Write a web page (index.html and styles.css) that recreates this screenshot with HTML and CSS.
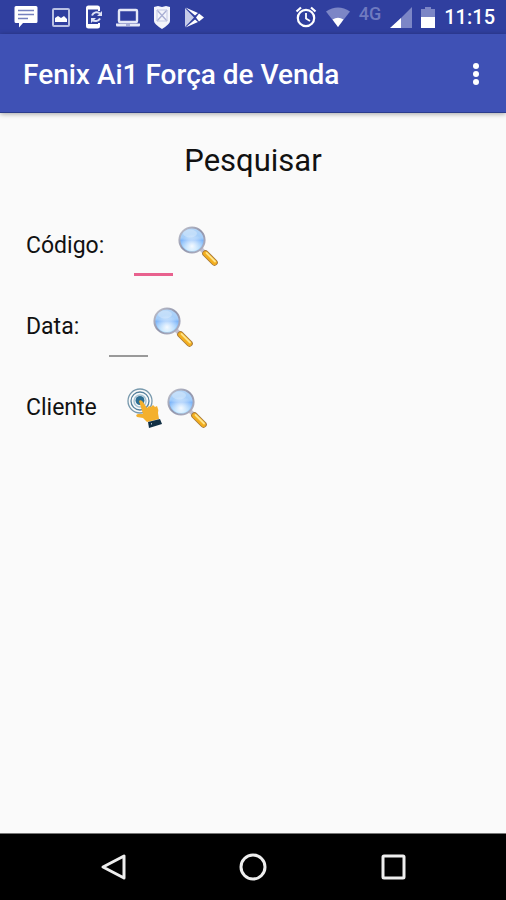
FILE: index.html
```html
<!DOCTYPE html>
<html lang="pt-BR">
<head>
<meta charset="utf-8">
<meta name="viewport" content="width=device-width, initial-scale=1">
<title>Fenix Ai1 Força de Venda</title>
<link rel="stylesheet" href="styles.css">
</head>
<body>
<svg class="defs" aria-hidden="true">
  <defs>
    <linearGradient id="glass" x1="0" y1="0" x2="0" y2="1">
      <stop offset="0" stop-color="#b4d6f8"/>
      <stop offset=".42" stop-color="#a3cdfa"/>
      <stop offset=".52" stop-color="#7cb5fa"/>
      <stop offset="1" stop-color="#b5e4ff"/>
    </linearGradient>
    <radialGradient id="shine" cx=".5" cy=".78" r=".55">
      <stop offset="0" stop-color="#fff" stop-opacity=".9"/>
      <stop offset="1" stop-color="#fff" stop-opacity="0"/>
    </radialGradient>
    <linearGradient id="rim" x1="0" y1="0" x2="1" y2="1">
      <stop offset="0" stop-color="#c3c5cf"/>
      <stop offset=".5" stop-color="#9195ac"/>
      <stop offset="1" stop-color="#b4b4c4"/>
    </linearGradient>
    <symbol id="magnifier" viewBox="0 0 40 40">
      <path d="M23 23l4 4" stroke="#c4c1d0" stroke-width="4"/>
      <circle cx="14" cy="14" r="12.6" fill="url(#glass)" stroke="url(#rim)" stroke-width="2"/>
      <circle cx="14" cy="14" r="11" fill="url(#shine)"/>
      <ellipse cx="12" cy="7.500" rx="7" ry="4" fill="#fff" opacity=".28"/>
      <path d="M27.500 27.500l9 9" stroke="#a77a3c" stroke-width="6.600" stroke-linecap="round"/>
      <path d="M27.500 27.500l9 9" stroke="#f3ae1d" stroke-width="4.800" stroke-linecap="round"/>
      <path d="M28.500 27l8.500 8.500" stroke="#ffe48a" stroke-width="1.800" stroke-linecap="round"/>
    </symbol>
  </defs>
</svg>

<div class="screen">
  <div class="status">
    <div class="notices">
      <svg width="24" height="24" viewBox="0 0 24 24"><path d="M2 1h20q1.500 0 1.500 1.500v14q0 1.500-1.500 1.500H9l-4 4.500V18H2q-1.500 0-1.500-1.500v-14Q.5 1 2 1z" fill="#fff"/><path d="M4 5.500h16M4 9.500h16M4 13.500h10" stroke="#7580bd" stroke-width="1.500"/></svg>
      <svg width="18" height="24" viewBox="0 0 18 24"><rect x="1" y="4" width="16" height="17" rx="1" fill="none" stroke="#b9c0e3" stroke-width="2"/><path d="M3 17v-4l3-2 3 2 3-2 3 3v3z" fill="#fff"/></svg>
      <svg width="18" height="24" viewBox="0 0 18 24"><path d="M15 6V3q0-1.500-1.500-1.500h-9Q3 1.500 3 3v18q0 1.500 1.500 1.500h9Q15 22.500 15 21v-3" fill="none" stroke="#fff" stroke-width="2"/><path d="M3 3h12M3 20.500h12" stroke="#fff" stroke-width="3"/><path d="M16 8.500a5 5 0 0 0-8 2M8 14.500a5 5 0 0 0 8-1" fill="none" stroke="#dfe3f6" stroke-width="2"/><path d="M18 6v5h-5zM7 18v-5h5z" fill="#dfe3f6"/></svg>
      <svg width="24" height="24" viewBox="0 0 24 24"><rect x="3" y="5" width="18" height="12" rx="1" fill="none" stroke="#e5e8f7" stroke-width="2.400"/><path d="M0 18.500h24v1.500q0 1.500-1 1.500H1q-1 0-1-1.500z" fill="#e5e8f7"/><path d="M10 20h4" stroke="#6873b5"/></svg>
      <svg width="16" height="24" viewBox="0 0 16 24"><path d="M0 2l4-1 4 1 4-1 4 1v14q0 3-8 8-8-5-8-8z" fill="#f3f4fb"/><path d="M3 5l10 11M13 5L3 16" stroke="#a9afd4" stroke-width="1.300"/><path d="M3 5h10v11H3z" fill="none" stroke="#c4c9e4" stroke-width="1"/></svg>
      <svg width="20" height="24" viewBox="0 0 20 24"><path d="M1 3v19l9-9.500z" fill="#c6cce8"/><path d="M1.500 2.500l9.500 8 3-2.500zM1.500 22.500l9.500-8 3 2.500z" fill="#fff"/><path d="M12 12.500l3-4 5 4-5 4z" fill="#fff"/></svg>
    </div>
    <div class="signals">
      <svg width="22" height="24" viewBox="0 0 22 24"><circle cx="11" cy="13" r="8.200" fill="none" stroke="#fff" stroke-width="2.200"/><path d="M11 8v5.500l4 2.500" fill="none" stroke="#fff" stroke-width="1.800"/><path d="M1.500 6.500l4.500-4M20.500 6.500l-4.500-4" stroke="#fff" stroke-width="2.200"/></svg>
      <svg width="24" height="24" viewBox="0 0 24 24"><path d="M0 6.500Q12-1.500 24 6.500L12 22z" fill="#7c86c6"/><path d="M6.500 14.500q5.500-3.500 11 0L12 22z" fill="#fff"/></svg>
      <span class="network">4G</span>
      <svg width="22" height="24" viewBox="0 0 22 24"><path d="M22 2v21H1z" fill="#7c86c6"/><path d="M11 13v10H0z" fill="#fff"/></svg>
      <svg width="14" height="24" viewBox="0 0 14 24"><path d="M0 4h4V2h6v2h4v9H0z" fill="#7c86c6"/><path d="M0 12h14v11H0z" fill="#fff"/></svg>
      <time class="clock">11:15</time>
    </div>
  </div>

  <header class="appbar">
    <h1 class="app-title">Fenix Ai1 Força de Venda</h1>
    <button class="more" type="button" aria-label="Mais opções"><svg width="8" height="24" viewBox="0 0 8 24"><g fill="#fff"><circle cx="4" cy="3" r="3"/><circle cx="4" cy="11" r="3"/><circle cx="4" cy="19" r="3"/></g></svg></button>
  </header>

  <main class="content">
    <h2 class="heading">Pesquisar</h2>
    <form class="form">
      <div class="row">
        <label class="label" for="codigo">Código:</label>
        <input class="field field-active" id="codigo" type="text">
        <button class="icon-button" type="button" aria-label="Pesquisar código"><svg width="40" height="40"><use href="#magnifier"/></svg></button>
      </div>
      <div class="row">
        <label class="label" for="data">Data:</label>
        <input class="field" id="data" type="text">
        <button class="icon-button" type="button" aria-label="Pesquisar data"><svg width="40" height="40"><use href="#magnifier"/></svg></button>
      </div>
      <div class="row">
        <span class="label">Cliente</span>
        <button class="icon-button" type="button" aria-label="Selecionar cliente">
          <svg width="35" height="40" viewBox="0 0 35 40"><g fill="none"><circle cx="13" cy="13" r="12" stroke="#7899ad" stroke-width="1.300"/><circle cx="13" cy="13" r="9" stroke="#55819c" stroke-width="1.300"/><circle cx="13" cy="13" r="6" stroke="#a9c5d5" stroke-width="1.500"/></g><circle cx="13" cy="12.500" r="4.500" fill="#2c6d92"/><path d="M12 13q2-2 4 1l4 6 2-2 2 1 2-2 2 2 2-1q2 4 1 7l1 6-12 3-4-4-6-1q-2-2 1-3l5 0z" fill="#f4b02d"/><path d="M21 34l12-3 2 5-13 4z" fill="#112f44"/><path d="M24 36l1-.3" stroke="#fff"/></svg>
        </button>
        <button class="icon-button" type="button" aria-label="Pesquisar cliente"><svg width="40" height="40"><use href="#magnifier"/></svg></button>
      </div>
    </form>
  </main>

  <nav class="navbar" aria-label="Sistema">
    <button class="nav-button" type="button" aria-label="Voltar"><svg width="28" height="28" viewBox="0 0 28 28"><path d="M25 3v22L4 14z"/></svg></button>
    <button class="nav-button" type="button" aria-label="Início"><svg width="28" height="28" viewBox="0 0 28 28"><circle cx="14" cy="14" r="12"/></svg></button>
    <button class="nav-button" type="button" aria-label="Recentes"><svg width="28" height="28" viewBox="0 0 28 28"><rect x="4" y="3" width="21" height="22" rx="1"/></svg></button>
  </nav>
</div>
</body>
</html>
```
FILE: styles.css
```css
* {
  box-sizing: border-box;
}

body {
  margin: 0;
  font-family: Roboto, "Liberation Sans", sans-serif;
  color: #111;
  background: #fafafa;
}

svg {
  display: block;
}

button {
  padding: 0;
  border: 0;
  background: none;
}

.defs {
  position: absolute;
  width: 0;
  height: 0;
}

.screen {
  display: flex;
  flex-direction: column;
  min-height: 100vh;
}

.status {
  display: flex;
  justify-content: space-between;
  align-items: center;
  height: 34px;
  padding: 0 11px 0 14px;
  background: #303f9f;
}

.notices {
  display: flex;
  align-items: center;
  gap: 14px;
}

.signals {
  display: flex;
  align-items: center;
  gap: 9px;
}

.network {
  align-self: flex-start;
  font-size: 18px;
  line-height: 18px;
  font-weight: 500;
  color: #6f7ac0;
}

.clock {
  font-size: 20px;
  line-height: 24px;
  font-weight: 500;
  color: #fff;
}

.appbar {
  display: flex;
  justify-content: space-between;
  align-items: center;
  height: 79px;
  padding: 4px 26px 0 23px;
  background: #3f51b5;
  border-bottom: 1px solid #2b3c8c;
  box-shadow: 0 1px 5px rgba(0, 0, 0, 0.35);
}

.app-title {
  margin: 0;
  font-size: 28px;
  line-height: 32px;
  font-weight: 500;
  color: #fff;
}

.content {
  flex: 1;
  padding: 28px 26px;
}

.heading {
  margin: 0 0 24px;
  font-size: 31px;
  line-height: 40px;
  font-weight: 400;
  text-align: center;
}

.row {
  display: flex;
  align-items: center;
  height: 81px;
  gap: 5px;
}

.label {
  margin-right: 25px;
  font-size: 23px;
  line-height: 28px;
}

.field {
  width: 39px;
  height: 60px;
  padding: 0;
  border: 0;
  border-bottom: 2px solid #999;
  border-radius: 0;
  outline: 0;
  background: none;
  font: inherit;
  font-size: 23px;
}

.field-active {
  border-bottom: 3px solid #e8618e;
}

.navbar {
  display: flex;
  justify-content: center;
  align-items: center;
  gap: 112px;
  height: 67px;
  background: #000;
  border-top: 1px solid #777;
}

.nav-button svg {
  fill: none;
  stroke: #eee;
  stroke-width: 3px;
  stroke-linejoin: round;
}
```
